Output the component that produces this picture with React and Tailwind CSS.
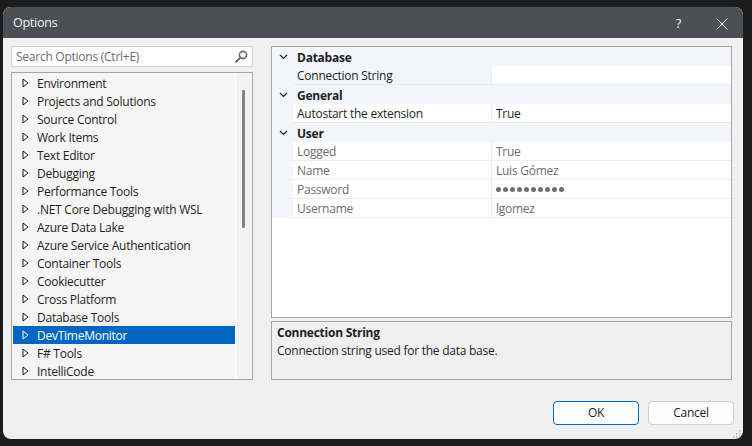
import { useState } from "react";

const treeItems = [
  "Environment",
  "Projects and Solutions",
  "Source Control",
  "Work Items",
  "Text Editor",
  "Debugging",
  "Performance Tools",
  ".NET Core Debugging with WSL",
  "Azure Data Lake",
  "Azure Service Authentication",
  "Container Tools",
  "Cookiecutter",
  "Cross Platform",
  "Database Tools",
  "DevTimeMonitor",
  "F# Tools",
  "IntelliCode",
];

const groups = [
  {
    name: "Database",
    props: [{ name: "Connection String", value: "", selected: true }],
  },
  {
    name: "General",
    props: [{ name: "Autostart the extension", value: "True" }],
  },
  {
    name: "User",
    props: [
      { name: "Logged", value: "True", readOnly: true },
      { name: "Name", value: "Luis Gómez", readOnly: true },
      { name: "Password", value: "dots", readOnly: true },
      { name: "Username", value: "lgomez", readOnly: true },
    ],
  },
];

function Expander({ light }) {
  return (
    <svg width="7" height="10" viewBox="0 0 7 10" className="shrink-0">
      <path d="M1 1 L6 5 L1 9 Z" fill="none" stroke={light ? "#ffffff" : "#1e1e1e"} strokeWidth="1" strokeLinejoin="round" />
    </svg>
  );
}

function Chevron() {
  return (
    <svg width="9" height="6" viewBox="0 0 9 6">
      <path d="M1 1 L4.5 4.5 L8 1" fill="none" stroke="#1e1e1e" strokeWidth="1.2" />
    </svg>
  );
}

function Dots() {
  return (
    <div className="flex gap-[2px] items-center">
      {Array.from({ length: 10 }).map((_, i) => (
        <span key={i} className="w-[5px] h-[5px] rounded-full bg-[#707070]" />
      ))}
    </div>
  );
}

export default function App() {
  const [selected] = useState("DevTimeMonitor");

  return (
    <div
      className="w-[752px] h-[446px] bg-[#1c1c1c] pt-[7px] pl-[3px] text-[12px] tracking-[-0.25px] text-[#1e1e1e]"
      style={{ fontFamily: '"Open Sans", "Noto Sans", sans-serif' }}
    >
      <div className="w-[740px] h-[432px] rounded-[8px] overflow-hidden bg-[#f0f0f0] flex flex-col relative">
        {/* title bar */}
        <div className="h-[31px] bg-[#4a5055] flex items-center pl-[10px] pt-[2px] shrink-0">
          <span className="text-[#f3f3f3] text-[12.5px]">Options</span>
          <span className="ml-auto text-[#f3f3f3] text-[13px] mr-[35px]">?</span>
          <svg width="12" height="12" viewBox="0 0 12 12" className="mr-[15px]">
            <path d="M0.5 0.5 L11.5 11.5 M11.5 0.5 L0.5 11.5" stroke="#f3f3f3" strokeWidth="1" />
          </svg>
        </div>

        {/* body */}
        <div className="flex pl-[8px] pt-[8px] gap-[18px]">
          {/* left */}
          <div className="w-[242px] flex flex-col gap-[5px]">
            <div className="h-[21px] bg-white border border-[#ccd2dc] flex items-center pl-[4px] pr-[4px]">
              <span className="text-[#6b6b6b]">Search Options (Ctrl+E)</span>
              <svg width="13" height="13" viewBox="0 0 13 13" className="ml-auto">
                <circle cx="8" cy="5" r="3.6" fill="none" stroke="#6a6a6a" strokeWidth="1.6" />
                <path d="M5.4 7.6 L1.2 11.8" stroke="#6a6a6a" strokeWidth="2" strokeLinecap="round" />
              </svg>
            </div>
            <div className="h-[308px] border border-[#a5a5a5] bg-[#f5f5f5] flex">
              <div className="flex-1 pl-[1px] pt-[1px]">
                {treeItems.map((item) => {
                  const sel = item === selected;
                  return (
                    <div
                      key={item}
                      className={
                        sel
                          ? "h-[18px] flex items-center bg-[#0067c0] text-white pl-[9px] gap-[8px]"
                          : "h-[18px] flex items-center pl-[9px] gap-[8px]"
                      }
                    >
                      <Expander light={sel} />
                      <span className="whitespace-nowrap relative top-[1px]">{item}</span>
                    </div>
                  );
                })}
              </div>
              <div className="w-[17px] border-l border-white bg-[#f3f3f3] pt-[17px]">
                <div className="ml-[6px] w-[3px] h-[138px] bg-[#858585] rounded-[1px]" />
              </div>
            </div>
          </div>

          {/* right */}
          <div className="w-[461px] flex flex-col gap-[3px]">
            <div className="h-[272px] border border-[#a5a5a5] bg-white">
              {groups.map((g) => (
                <div key={g.name}>
                  <div className="h-[19px] bg-[#f2f5fa] flex items-center">
                    <div className="w-[21px] flex justify-center pl-[1px]">
                      <Chevron />
                    </div>
                    <span className="font-bold pl-[4px] relative top-[1px]">{g.name}</span>
                  </div>
                  {g.props.map((p) => (
                    <div key={p.name} className="h-[19px] flex bg-[#f2f5fa]">
                      <div className="w-[21px] shrink-0" />
                      <div
                        className={
                          (p.selected ? "bg-[#f2f5fa] " : "bg-white ") +
                          "w-[199px] flex items-center pl-[4px] pt-[1px] border-b border-r border-[#e9ecf1] " +
                          (p.readOnly ? "text-[#6d6d6d]" : "")
                        }
                      >
                        {p.name}
                      </div>
                      <div
                        className={
                          "flex-1 bg-white flex items-center pl-[4px] pt-[1px] border-b border-[#e9ecf1] " +
                          (p.readOnly ? "text-[#6d6d6d]" : "")
                        }
                      >
                        {p.value === "dots" ? <Dots /> : p.value}
                      </div>
                    </div>
                  ))}
                </div>
              ))}
            </div>
            <div className="h-[59px] border border-[#a5a5a5] bg-[#f0f0f0] px-[5px] pt-[2px] leading-[18px]">
              <div className="font-bold">Connection String</div>
              <div>Connection string used for the data base.</div>
            </div>
          </div>
        </div>

        {/* buttons */}
        <div className="flex justify-end gap-[9px] pr-[9px] mt-[21px]">
          <button className="w-[86px] h-[24px] rounded-[4px] border border-[#0067c0] bg-[#fdfdfd]">OK</button>
          <button className="w-[86px] h-[24px] rounded-[4px] border border-[#d0d0d0] bg-[#fdfdfd]">Cancel</button>
        </div>

        {/* resize grip */}
        <svg width="8" height="8" viewBox="0 0 8 8" className="absolute right-[2px] bottom-[1px]">
          <rect x="6" y="0" width="1.5" height="1.5" fill="#b5b5b5" />
          <rect x="3" y="3" width="1.5" height="1.5" fill="#b5b5b5" />
          <rect x="6" y="3" width="1.5" height="1.5" fill="#b5b5b5" />
          <rect x="0" y="6" width="1.5" height="1.5" fill="#b5b5b5" />
          <rect x="3" y="6" width="1.5" height="1.5" fill="#b5b5b5" />
          <rect x="6" y="6" width="1.5" height="1.5" fill="#b5b5b5" />
        </svg>
      </div>
    </div>
  );
}
